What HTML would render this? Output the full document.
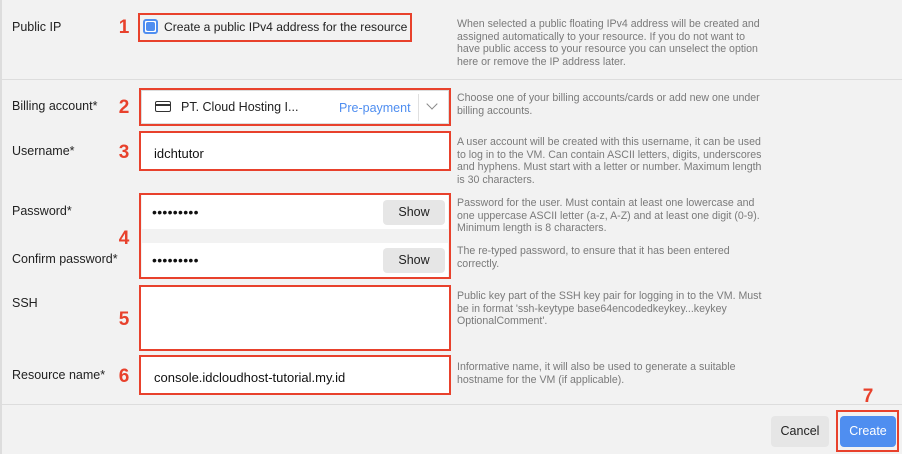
<html><head><style>
body{margin:0;width:902px;height:454px;background:#f2f2f2;font-family:"Liberation Sans",sans-serif;position:relative;overflow:hidden;color:#222}
div,span{position:absolute;box-sizing:border-box}
.lbl{left:12px;font-size:12.5px;color:#222}
.num{font-size:19px;font-weight:bold;color:#e8412c;width:14px;text-align:center}
.in{background:#fff;border:1px solid #ddd;font-size:13px;color:#111}
.red{border:2px solid #e8412c !important}
.help{left:457px;width:308px;font-size:10.6px;line-height:12.6px;color:#7a7a7a}
.show{background:#e6e6e6;border-radius:4px;font-size:12.5px;color:#222;text-align:center;line-height:24px}
.hr{left:0;right:0;height:1px;background:#ddd}
.dots{font-size:14px;letter-spacing:0.3px}
</style></head><body>
<div style="left:0;top:0;width:2px;height:454px;background:#ddd"></div>
<div class="hr" style="top:79px"></div>
<div class="hr" style="top:404px"></div>

<div class="lbl" style="top:20px">Public IP</div>
<div class="num" style="left:117px;top:17px">1</div>
<div class="red" style="left:138px;top:13px;width:274px;height:29px"></div>
<div style="left:143px;top:19px;width:15px;height:15px;border:2px solid #4f8ef0;border-radius:3px;background:#fff"><div style="left:1px;top:1px;width:9px;height:9px;background:#4f8ef0;border-radius:2px"></div></div>
<div style="left:164px;top:20px;font-size:12.1px">Create a public IPv4 address for the resource</div>
<div class="help" style="top:18px">When selected a public floating IPv4 address will be created and assigned automatically to your resource. If you do not want to have public access to your resource you can unselect the option here or remove the IP address later.</div>

<div class="lbl" style="top:99px">Billing account*</div>
<div class="num" style="left:117px;top:97px">2</div>
<div class="in" style="left:141px;top:90px;width:308px;height:34px"></div>
<div style="left:155px;top:101px;width:16px;height:11px;border:1.6px solid #333;border-radius:2px"><div style="left:0;right:0;top:2px;height:2px;background:#333"></div></div>
<div style="left:181px;top:100px;font-size:12.5px">PT. Cloud Hosting I...</div>
<div style="left:339px;top:101px;font-size:12.5px;color:#4f8ef0">Pre-payment</div>
<div style="left:418px;top:94px;width:1px;height:27px;background:#e0e0e0"></div>
<div style="left:428px;top:100px;width:8px;height:8px;border-right:1.5px solid #888;border-bottom:1.5px solid #888;transform:rotate(45deg)"></div>
<div class="red" style="left:139px;top:88px;width:312px;height:38px"></div>
<div class="help" style="top:92px">Choose one of your billing accounts/cards or add new one under billing accounts.</div>

<div class="lbl" style="top:144px">Username*</div>
<div class="num" style="left:117px;top:142px">3</div>
<div class="in red" style="left:139px;top:131px;width:312px;height:40px;padding:13px 0 0 13px">idchtutor</div>
<div class="help" style="top:136px">A user account will be created with this username, it can be used to log in to the VM. Can contain ASCII letters, digits, underscores and hyphens. Must start with a letter or number. Maximum length is 30 characters.</div>

<div class="lbl" style="top:204px">Password*</div>
<div class="lbl" style="top:252px">Confirm password*</div>
<div class="num" style="left:117px;top:228px">4</div>
<div class="in dots" style="left:142px;top:195px;width:306px;height:34px;border:none;padding:9px 0 0 10px">•••••••••</div>
<div class="in dots" style="left:142px;top:243px;width:306px;height:34px;border:none;padding:9px 0 0 10px">•••••••••</div>
<div class="show" style="left:383px;top:200px;width:62px;height:25px">Show</div>
<div class="show" style="left:383px;top:248px;width:62px;height:25px">Show</div>
<div class="red" style="left:139px;top:193px;width:312px;height:86px"></div>
<div class="help" style="top:197px">Password for the user. Must contain at least one lowercase and one uppercase ASCII letter (a-z, A-Z) and at least one digit (0-9). Minimum length is 8 characters.</div>
<div class="help" style="top:245px">The re-typed password, to ensure that it has been entered correctly.</div>

<div class="lbl" style="top:296px">SSH</div>
<div class="num" style="left:117px;top:309px">5</div>
<div class="in red" style="left:139px;top:285px;width:312px;height:66px"></div>
<div class="help" style="top:290px">Public key part of the SSH key pair for logging in to the VM. Must be in format 'ssh-keytype base64encodedkeykey...keykey OptionalComment'.</div>

<div class="lbl" style="top:368px">Resource name*</div>
<div class="num" style="left:117px;top:366px">6</div>
<div class="in red" style="left:139px;top:355px;width:312px;height:40px;padding:13px 0 0 13px">console.idcloudhost-tutorial.my.id</div>
<div class="help" style="top:361px">Informative name, it will also be used to generate a suitable hostname for the VM (if applicable).</div>

<div class="num" style="left:861px;top:386px">7</div>
<div class="show" style="left:771px;top:416px;width:58px;height:31px;line-height:31px;font-size:12.5px">Cancel</div>
<div class="red" style="left:836px;top:410px;width:63px;height:42px"></div>
<div style="left:840px;top:416px;width:56px;height:31px;background:#4f8ef0;border-radius:4px;color:#fff;font-size:12.5px;text-align:center;line-height:31px">Create</div>
</body></html>
